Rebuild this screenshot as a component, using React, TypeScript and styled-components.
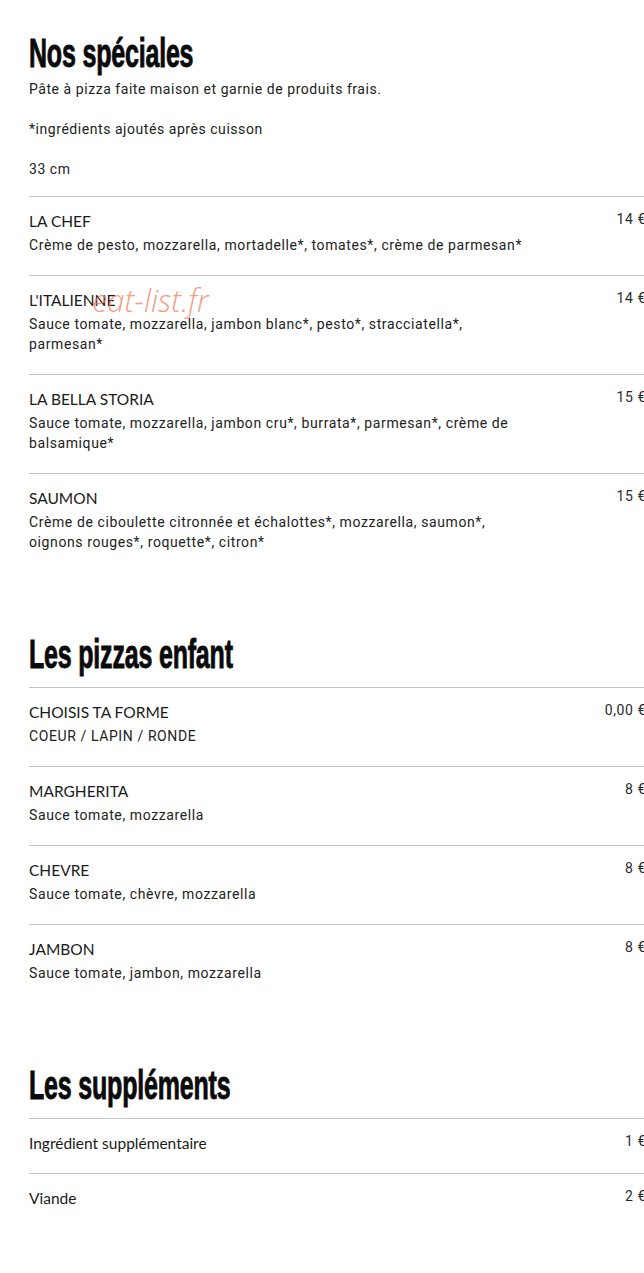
import React from 'react';
import styled, {createGlobalStyle} from 'styled-components';

type Item = {
    name: string
    desc?: string
    price: string
}

type Section = {
    title: string
    notes?: string[]
    items: Item[]
}

const sections: Section[] = [
    {
        title: 'Nos spéciales',
        notes: [
            'Pâte à pizza faite maison et garnie de produits frais.',
            '*ingrédients ajoutés après cuisson',
            '33 cm',
        ],
        items: [
            {name: 'LA CHEF', desc: 'Crème de pesto, mozzarella, mortadelle*, tomates*, crème de parmesan*', price: '14 €'},
            {name: "L'ITALIENNE", desc: 'Sauce tomate, mozzarella, jambon blanc*, pesto*, stracciatella*, parmesan*', price: '14 €'},
            {name: 'LA BELLA STORIA', desc: 'Sauce tomate, mozzarella, jambon cru*, burrata*, parmesan*, crème de balsamique*', price: '15 €'},
            {name: 'SAUMON', desc: 'Crème de ciboulette citronnée et échalottes*, mozzarella, saumon*, oignons rouges*, roquette*, citron*', price: '15 €'},
        ],
    },
    {
        title: 'Les pizzas enfant',
        items: [
            {name: 'CHOISIS TA FORME', desc: 'COEUR / LAPIN / RONDE', price: '0,00 €'},
            {name: 'MARGHERITA', desc: 'Sauce tomate, mozzarella', price: '8 €'},
            {name: 'CHEVRE', desc: 'Sauce tomate, chèvre, mozzarella', price: '8 €'},
            {name: 'JAMBON', desc: 'Sauce tomate, jambon, mozzarella', price: '8 €'},
        ],
    },
    {
        title: 'Les suppléments',
        items: [
            {name: 'Ingrédient supplémentaire', price: '1 €'},
            {name: 'Viande', price: '2 €'},
        ],
    },
]

const GlobalStyle = createGlobalStyle`
  body {
    margin: 0;
    background: #fff;
    overflow-x: hidden;
  }
`

const Page = styled.main`
  position: relative;
  padding: 33px 0 40px 29px;
  margin-right: -2px;
  display: flex;
  flex-direction: column;
  gap: 62px;
  color: #1c1c1c;
`

const Block = styled.section`
  display: flex;
  flex-direction: column;
`

const Title = styled.h2`
  margin: 0;
  height: 40px;
  font-family: "Liberation Sans Narrow", "Liberation Sans", sans-serif;
  font-weight: 700;
  font-size: 40px;
  line-height: 40px;
  letter-spacing: -0.3px;
  color: #0a0a0a;
  -webkit-text-stroke: 0.9px #0a0a0a;
  transform: scaleX(0.625);
  transform-origin: left center;
  white-space: nowrap;
`

const Notes = styled.div`
  display: flex;
  flex-direction: column;
  gap: 20px;
  margin-top: 6px;
  margin-bottom: 17px;
`

const Note = styled.p`
  margin: 0;
  font-family: Roboto, "Liberation Sans", sans-serif;
  font-size: 14px;
  line-height: 20px;
  letter-spacing: 0.55px;
  color: #222;
`

const List = styled.div<{ $gap: boolean }>`
  margin-top: ${p => (p.$gap ? '13px' : '0')};
  display: flex;
  flex-direction: column;
`

const Row = styled.div`
  display: flex;
  justify-content: space-between;
  align-items: flex-start;
  gap: 40px;
  padding: 14px 0 20px;
  border-top: 1px solid #c4c4c4;
`

const Info = styled.div`
  display: flex;
  flex-direction: column;
  gap: 4px;
  max-width: 500px;
`

const Name = styled.div`
  font-family: Lato, "Liberation Sans", sans-serif;
  font-size: 15.5px;
  line-height: 20px;
  color: #1a1a1a;
`

const Desc = styled.div`
  font-family: Roboto, "Liberation Sans", sans-serif;
  font-size: 14px;
  line-height: 20px;
  letter-spacing: 0.6px;
  color: #222;
`

const Price = styled.div`
  margin-top: -2px;
  font-family: Roboto, "Liberation Sans", sans-serif;
  font-size: 14px;
  line-height: 20px;
  letter-spacing: 0.6px;
  color: #2a2a2a;
  white-space: nowrap;
`

const Watermark = styled.div`
  position: absolute;
  left: 92px;
  top: 283px;
  font-family: "Open Sans", "Liberation Sans", sans-serif;
  font-style: italic;
  font-weight: 300;
  font-size: 31px;
  line-height: 34px;
  color: rgba(240, 125, 90, 0.75);
  pointer-events: none;
`

const App: React.FC = () => {
    return (
        <>
            <GlobalStyle/>
            <Page>
                {sections.map(section => (
                    <Block key={section.title}>
                        <Title>{section.title}</Title>
                        {section.notes && (
                            <Notes>
                                {section.notes.map(n => <Note key={n}>{n}</Note>)}
                            </Notes>
                        )}
                        <List $gap={!section.notes}>
                            {section.items.map(item => (
                                <Row key={item.name}>
                                    <Info>
                                        <Name>{item.name}</Name>
                                        {item.desc && <Desc>{item.desc}</Desc>}
                                    </Info>
                                    <Price>{item.price}</Price>
                                </Row>
                            ))}
                        </List>
                    </Block>
                ))}
                <Watermark>eat-list.fr</Watermark>
            </Page>
        </>
    );
};

export default App;
